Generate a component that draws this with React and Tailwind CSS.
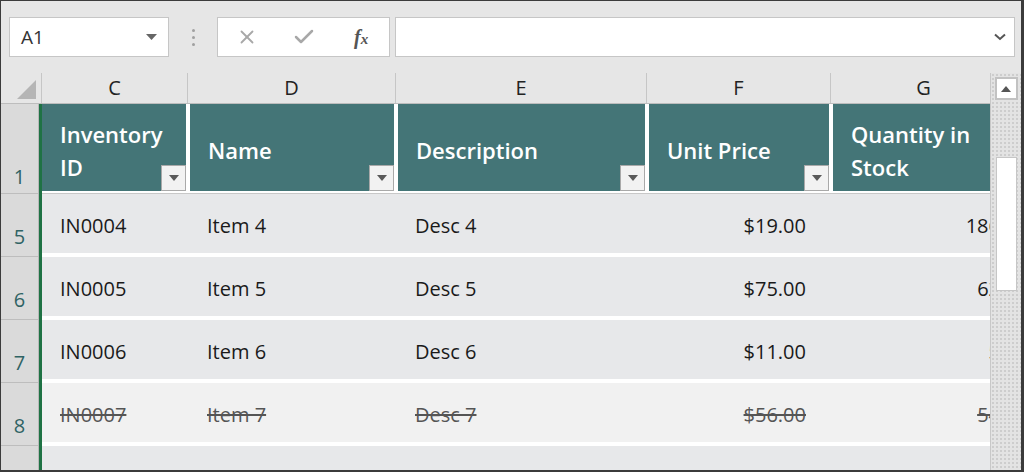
import { Check, X } from 'lucide-react';

const rows = [
  { n: 5, id: 'IN0004', name: 'Item 4', desc: 'Desc 4', price: '$19.00', qty: '186' },
  { n: 6, id: 'IN0005', name: 'Item 5', desc: 'Desc 5', price: '$75.00', qty: '62' },
  { n: 7, id: 'IN0006', name: 'Item 6', desc: 'Desc 6', price: '$11.00', qty: '5' },
  { n: 8, id: 'IN0007', name: 'Item 7', desc: 'Desc 7', price: '$56.00', qty: '54', done: true },
];

function FilterButton() {
  return (
    <div className="absolute right-0 bottom-0 w-[25px] h-[26px] bg-[#f2f2f2] border border-[#a9a9a9] flex items-center justify-center">
      <svg width="10" height="6" viewBox="0 0 10 6">
        <path d="M0 0h10L5 6z" fill="#595959" />
      </svg>
    </div>
  );
}

function HeaderCell({ width, border, children, filter }) {
  return (
    <div className={`${width} ${border} shrink-0 h-[87px] border-white`}>
      <div className="relative h-full bg-[#447577] flex items-center pl-[18px] pt-[6px] text-white text-[22px] font-semibold leading-[33px]">
        <div>{children}</div>
        {filter && <FilterButton />}
      </div>
    </div>
  );
}

export default function App() {
  return (
    <div className="w-[1024px] h-[472px] overflow-hidden bg-[#e6e6e6] border-t border-l border-r-[3px] border-b-2 border-[#3b3b3b] flex flex-col font-['Open_Sans',sans-serif]">
      {/* Toolbar */}
      <div className="h-[72px] shrink-0 flex items-start pt-[16px] pl-[8px] pr-[6px]">
        <div className="w-[160px] h-[40px] bg-white border border-[#c6c6c6] flex items-center justify-between pl-[11px] pr-[11px]">
          <span className="text-[19px] text-[#333]">A1</span>
          <svg width="11" height="6" viewBox="0 0 11 6">
            <path d="M0 0h11L5.5 6z" fill="#666" />
          </svg>
        </div>
        <div className="w-[48px] h-[40px] flex flex-col items-center justify-center gap-[4px]">
          <span className="w-[3px] h-[3px] rounded-full bg-[#a0a0a0]" />
          <span className="w-[3px] h-[3px] rounded-full bg-[#a0a0a0]" />
          <span className="w-[3px] h-[3px] rounded-full bg-[#a0a0a0]" />
        </div>
        <div className="w-[173px] h-[40px] bg-white border border-[#c6c6c6] flex items-center">
          <div className="w-[58px] flex justify-center">
            <X size={22} strokeWidth={2} color="#a8a8a8" />
          </div>
          <div className="w-[58px] flex justify-center">
            <Check size={24} strokeWidth={2.5} color="#a8a8a8" />
          </div>
          <div className="w-[56px] flex justify-center items-baseline font-['Liberation_Serif',serif] italic font-bold text-[#555]">
            <span className="text-[20px]">f</span>
            <span className="text-[15px]">x</span>
          </div>
        </div>
        <div className="flex-1 ml-[5px] h-[40px] bg-white border border-[#c6c6c6] flex items-center justify-end pr-[8px]">
          <svg width="12" height="8" viewBox="0 0 12 8">
            <path d="M1 1.5l5 4.5 5-4.5" stroke="#555" strokeWidth="2" fill="none" />
          </svg>
        </div>
      </div>

      <div className="flex flex-1 min-h-0">
        {/* Sheet */}
        <div className="w-[989px] shrink-0 flex flex-col overflow-hidden">
          {/* Column letters */}
          <div className="h-[31px] shrink-0 flex border-b border-[#bdbdbd] text-[20px] text-[#222]">
            <div className="w-[41px] shrink-0 border-r border-[#c6c6c6] flex items-end justify-end pr-[5px] pb-[4px]">
              <svg width="19" height="19" viewBox="0 0 19 19">
                <path d="M19 0v19H0z" fill="#b5b5b5" />
              </svg>
            </div>
            <div className="w-[146px] shrink-0 border-r border-[#c6c6c6] flex items-center justify-center">C</div>
            <div className="w-[208px] shrink-0 border-r border-[#c6c6c6] flex items-center justify-center">D</div>
            <div className="w-[251px] shrink-0 border-r border-[#c6c6c6] flex items-center justify-center">E</div>
            <div className="w-[184px] shrink-0 border-r border-[#c6c6c6] flex items-center justify-center">F</div>
            <div className="w-[186px] shrink-0 border-r border-[#c6c6c6] flex items-center justify-center">G</div>
          </div>

          <div className="flex flex-1 min-h-0">
            {/* Row numbers */}
            <div className="w-[38px] shrink-0 bg-[#dadada] border-r border-[#b8b8b8] flex flex-col text-[20px] text-[#2f6364]">
              <div className="h-[90px] shrink-0 border-b border-[#bdbdbd] flex items-end justify-center pb-[1px]">1</div>
              {rows.map((r) => (
                <div key={r.n} className="h-[63px] shrink-0 border-b border-[#bdbdbd] flex items-end justify-center pb-[4px]">
                  {r.n}
                </div>
              ))}
              <div className="flex-1" />
            </div>
            <div className="w-[3px] shrink-0 bg-[#1f7244]" />

            {/* Cells */}
            <div className="flex-1 min-w-0 overflow-hidden flex flex-col">
              <div className="h-[90px] shrink-0 flex bg-white pb-[2px] border-b border-[#c8c8c8] box-border">
                <HeaderCell width="w-[146px]" border="border-r-2" filter>
                  Inventory
                  <br />
                  ID
                </HeaderCell>
                <HeaderCell width="w-[208px]" border="border-x-2" filter>Name</HeaderCell>
                <HeaderCell width="w-[251px]" border="border-x-2" filter>Description</HeaderCell>
                <HeaderCell width="w-[184px]" border="border-x-2" filter>Unit Price</HeaderCell>
                <HeaderCell width="w-[186px]" border="border-l-2">
                  Quantity in
                  <br />
                  Stock
                </HeaderCell>
              </div>

              {rows.map((r) => (
                <div
                  key={r.n}
                  className={`h-[63px] shrink-0 flex border-b-4 border-white text-[20px] font-medium pt-[5px] ${
                    r.done ? 'bg-[#f1f1f1] text-[#555] line-through' : 'bg-[#e7e8ea] text-[#1a1a1a]'
                  }`}
                >
                  <div className="w-[146px] shrink-0 flex items-center pl-[18px]">{r.id}</div>
                  <div className="w-[208px] shrink-0 flex items-center pl-[19px]">{r.name}</div>
                  <div className="w-[251px] shrink-0 flex items-center pl-[19px]">{r.desc}</div>
                  <div className="w-[184px] shrink-0 flex items-center justify-end pr-[25px]">{r.price}</div>
                  <div className="w-[186px] shrink-0 flex items-center justify-end pr-[17px]">{r.qty}</div>
                </div>
              ))}
              <div className="flex-1 bg-[#e7e8ea]" />
            </div>
          </div>
        </div>

        {/* Vertical scrollbar */}
        <div className="flex-1 border-l border-[#c8c8c8] flex flex-col items-center pt-[4px] bg-[#e3e3e3] bg-[radial-gradient(#cdcdcd_1px,transparent_1px)] bg-[length:4px_4px]">
          <div className="w-[23px] h-[23px] bg-white border-2 border-[#c2c2c2] flex items-center justify-center">
            <svg width="10" height="6" viewBox="0 0 10 6">
              <path d="M5 0l5 6H0z" fill="#555" />
            </svg>
          </div>
          <div className="w-[21px] h-[134px] mt-[57px] bg-white border border-[#c6c6c6]" />
        </div>
      </div>
    </div>
  );
}
